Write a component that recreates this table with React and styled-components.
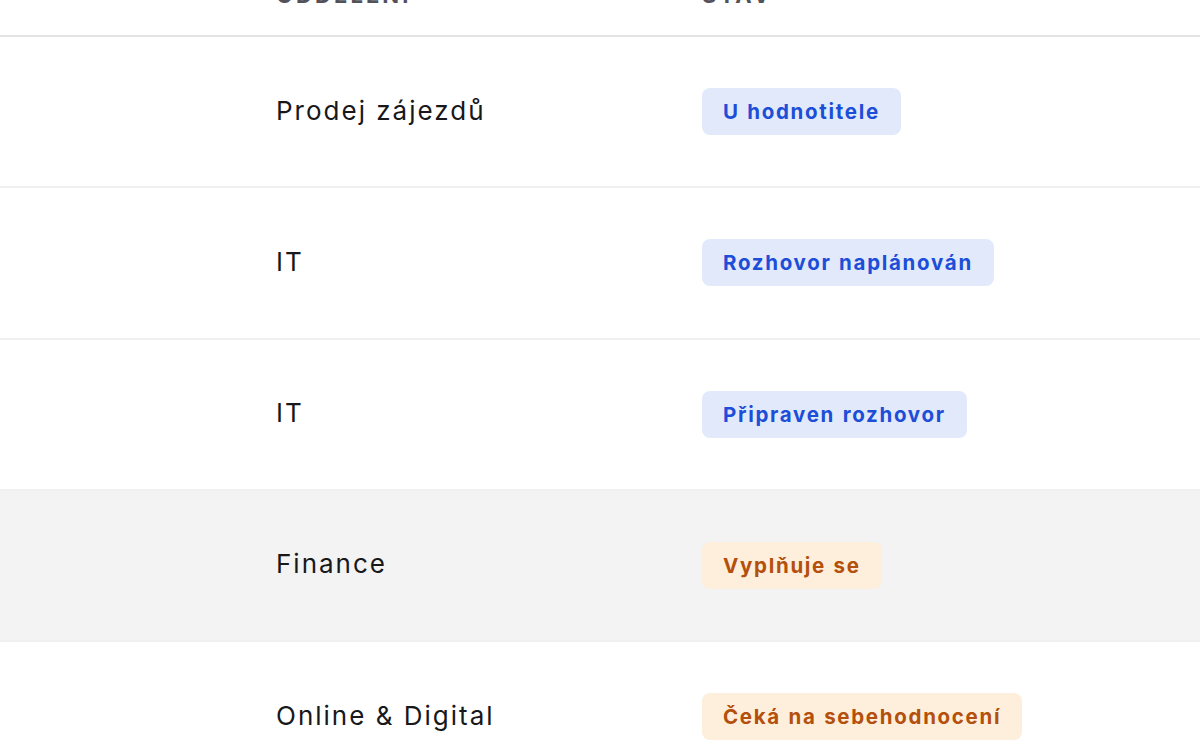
import React from "react";
import styled, { createGlobalStyle } from "styled-components";

const GlobalStyle = createGlobalStyle`
  html, body {
    margin: 0;
    padding: 0;
    background: #ffffff;
    overflow: hidden;
  }
  body {
    font-family: Inter, "Noto Sans", "Liberation Sans", sans-serif;
    -webkit-font-smoothing: antialiased;
  }
`;

const Table = styled.div`
  width: 1200px;
  margin-top: -45px;
  display: flex;
  flex-direction: column;
`;

const HeaderRow = styled.div`
  display: grid;
  grid-template-columns: 276px 426px 1fr;
  align-items: center;
  height: 80px;
  border-bottom: 2px solid #e4e4e7;
`;

const HeaderCell = styled.div`
  font-size: 22px;
  line-height: 32px;
  font-weight: 700;
  letter-spacing: 0.14em;
  text-transform: uppercase;
  color: #52525b;
`;

const Row = styled.div`
  display: grid;
  grid-template-columns: 276px 426px 1fr;
  align-items: center;
  height: 151.25px;
  box-sizing: border-box;
  border-bottom: 2px solid #f0f0f1;
  background: ${(p) => (p.$hover ? "#f3f3f3" : "#ffffff")};
`;

const Cell = styled.div`
  font-size: 26px;
  line-height: 40px;
  letter-spacing: 2px;
  color: #18181b;
  padding-bottom: 2px;
`;

const Badge = styled.span`
  display: inline-flex;
  align-items: center;
  height: 47px;
  padding: 0 21px;
  border-radius: 8px;
  font-size: 20.5px;
  font-weight: 700;
  letter-spacing: 1.7px;
  word-spacing: 1px;
  background: ${(p) => (p.$tone === "orange" ? "#fdefdc" : "#e2e9fa")};
  color: ${(p) => (p.$tone === "orange" ? "#b4500c" : "#1d4ed8")};
`;

const rows = [
  { dept: "Prodej zájezdů", status: "U hodnotitele", tone: "blue" },
  { dept: "IT", status: "Rozhovor naplánován", tone: "blue" },
  { dept: "IT", status: "Připraven rozhovor", tone: "blue" },
  { dept: "Finance", status: "Vyplňuje se", tone: "orange", hover: true },
  { dept: "Online & Digital", status: "Čeká na sebehodnocení", tone: "orange" },
];

export default function App() {
  return (
    <>
      <GlobalStyle />
      <Table>
        <HeaderRow>
          <div />
          <HeaderCell>Oddělení</HeaderCell>
          <HeaderCell>Stav</HeaderCell>
        </HeaderRow>
        {rows.map((r, i) => (
          <Row key={i} $hover={r.hover}>
            <div />
            <Cell>{r.dept}</Cell>
            <div>
              <Badge $tone={r.tone}>{r.status}</Badge>
            </div>
          </Row>
        ))}
      </Table>
    </>
  );
}
